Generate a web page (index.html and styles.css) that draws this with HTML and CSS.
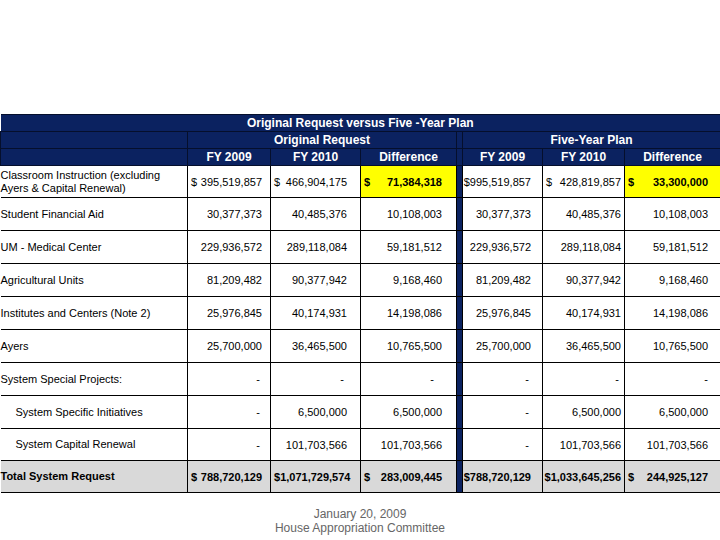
FILE: index.html
```html
<!DOCTYPE html>
<html>
<head>
<meta charset="utf-8">
<link rel="stylesheet" href="styles.css">
</head>
<body>
<div class="page">
<table class="grid">
<colgroup>
<col class="w-label"><col class="w-1"><col class="w-2"><col class="w-3"><col class="w-sep"><col class="w-4"><col class="w-5"><col class="w-6">
</colgroup>
<thead>
<tr class="h1"><th colspan="8">Original Request versus Five -Year Plan</th></tr>
<tr class="h2"><th></th><th colspan="3">Original Request</th><th class="sep"></th><th colspan="3">Five-Year Plan</th></tr>
<tr class="h3"><th></th><th>FY 2009</th><th>FY 2010</th><th>Difference</th><th class="sep"></th><th>FY 2009</th><th>FY 2010</th><th>Difference</th></tr>
</thead>
<tbody>
<tr class="first"><td class="label">Classroom Instruction (excluding<br>Ayers &amp; Capital Renewal)</td><td class="num c1"><span class="dol">$</span>395,519,857</td><td class="num c2"><span class="dol">$</span>466,904,175</td><td class="num c3 hl"><span class="dol">$</span>71,384,318</td><td class="sep"></td><td class="num c4">$995,519,857</td><td class="num c5"><span class="dol">$</span>428,819,857</td><td class="num c6 hl"><span class="dol">$</span>33,300,000</td></tr>
<tr><td class="label">Student Financial Aid</td><td class="num c1">30,377,373</td><td class="num c2">40,485,376</td><td class="num c3">10,108,003</td><td class="sep"></td><td class="num c4">30,377,373</td><td class="num c5">40,485,376</td><td class="num c6">10,108,003</td></tr>
<tr><td class="label">UM - Medical Center</td><td class="num c1">229,936,572</td><td class="num c2">289,118,084</td><td class="num c3">59,181,512</td><td class="sep"></td><td class="num c4">229,936,572</td><td class="num c5">289,118,084</td><td class="num c6">59,181,512</td></tr>
<tr><td class="label">Agricultural Units</td><td class="num c1">81,209,482</td><td class="num c2">90,377,942</td><td class="num c3">9,168,460</td><td class="sep"></td><td class="num c4">81,209,482</td><td class="num c5">90,377,942</td><td class="num c6">9,168,460</td></tr>
<tr><td class="label">Institutes and Centers (Note 2)</td><td class="num c1">25,976,845</td><td class="num c2">40,174,931</td><td class="num c3">14,198,086</td><td class="sep"></td><td class="num c4">25,976,845</td><td class="num c5">40,174,931</td><td class="num c6">14,198,086</td></tr>
<tr><td class="label">Ayers</td><td class="num c1">25,700,000</td><td class="num c2">36,465,500</td><td class="num c3">10,765,500</td><td class="sep"></td><td class="num c4">25,700,000</td><td class="num c5">36,465,500</td><td class="num c6">10,765,500</td></tr>
<tr><td class="label">System Special Projects:</td><td class="num c1 dash">-</td><td class="num c2 dash">-</td><td class="num c3 dash">-</td><td class="sep"></td><td class="num c4 dash">-</td><td class="num c5 dash">-</td><td class="num c6 dash">-</td></tr>
<tr><td class="label indent">System Specific Initiatives</td><td class="num c1 dash">-</td><td class="num c2">6,500,000</td><td class="num c3">6,500,000</td><td class="sep"></td><td class="num c4 dash">-</td><td class="num c5">6,500,000</td><td class="num c6">6,500,000</td></tr>
<tr class="short"><td class="label indent">System Capital Renewal</td><td class="num c1 dash">-</td><td class="num c2">101,703,566</td><td class="num c3">101,703,566</td><td class="sep"></td><td class="num c4 dash">-</td><td class="num c5">101,703,566</td><td class="num c6">101,703,566</td></tr>
<tr class="total short"><td class="label">Total System Request</td><td class="num c1"><span class="dol">$</span>788,720,129</td><td class="num c2"><span class="dol">$</span>1,071,729,574</td><td class="num c3"><span class="dol">$</span>283,009,445</td><td class="sep"></td><td class="num c4">$788,720,129</td><td class="num c5">$1,033,645,256</td><td class="num c6"><span class="dol">$</span>244,925,127</td></tr>
</tbody>
</table>
<div class="foot">
<div>January 20, 2009</div>
<div>House Appropriation Committee</div>
</div>
</div>
</body>
</html>
```
FILE: styles.css
```css
body {
  margin: 0;
  background: #ffffff;
  font-family: "Liberation Sans", Arial, sans-serif;
  color: #000;
}
.page {
  padding-top: 114px;
}
.grid {
  border-collapse: collapse;
  table-layout: fixed;
  width: 720px;
  font-size: 11px;
}
.w-label { width: 187px; }
.w-1 { width: 83px; }
.w-2 { width: 90px; }
.w-3 { width: 96px; }
.w-sep { width: 6px; }
.w-4 { width: 80px; }
.w-5 { width: 82px; }
.w-6 { width: 96px; }

.grid th {
  background: #0b2260;
  color: #fff;
  font-weight: bold;
  font-size: 12px;
  border: 1px solid #050f2c;
  padding: 0;
  height: 16px;
  text-align: center;
  white-space: nowrap;
}
.h1 th {
  border-left: none;
}
.grid td {
  border: 1px solid #000;
  padding: 0;
  height: 32px;
  vertical-align: middle;
  white-space: nowrap;
}
.grid tr.first td {
  height: 31px;
}
.grid tr.short td {
  height: 31px;
}
.grid td.label {
  text-align: left;
  padding-left: 0;
  border-left: none;
  line-height: 13px;
}
.grid td.indent {
  padding-left: 15px;
}
.grid .sep {
  background: #0b2260;
  padding: 0;
}
.grid td.sep {
  border-left: 1px solid #000;
  border-right: 1px solid #000;
}
.num {
  text-align: right;
}
.c1 { padding-right: 8px !important; }
.c2 { padding-right: 13px !important; }
.c3 { padding-right: 14px !important; }
.c4 { padding-right: 11px !important; }
.c5 { padding-right: 3px !important; }
.c6 { padding-right: 12px !important; }
.c1.dash { padding-right: 10px !important; }
.c2.dash { padding-right: 16px !important; }
.c3.dash { padding-right: 22px !important; }
.c4.dash { padding-right: 13px !important; }
.c5.dash { padding-right: 5px !important; }
.c6.dash { padding-right: 12px !important; }
.dol {
  float: left;
  padding-left: 3px;
}
.hl {
  background: #ffff00;
  font-weight: bold;
}
.total td {
  background: #d9d9d9;
  font-weight: bold;
}
.total td.sep {
  background: #0b2260;
}
.foot {
  margin-top: 14px;
  text-align: center;
  color: #666;
  font-size: 12px;
  line-height: 14px;
}
```
